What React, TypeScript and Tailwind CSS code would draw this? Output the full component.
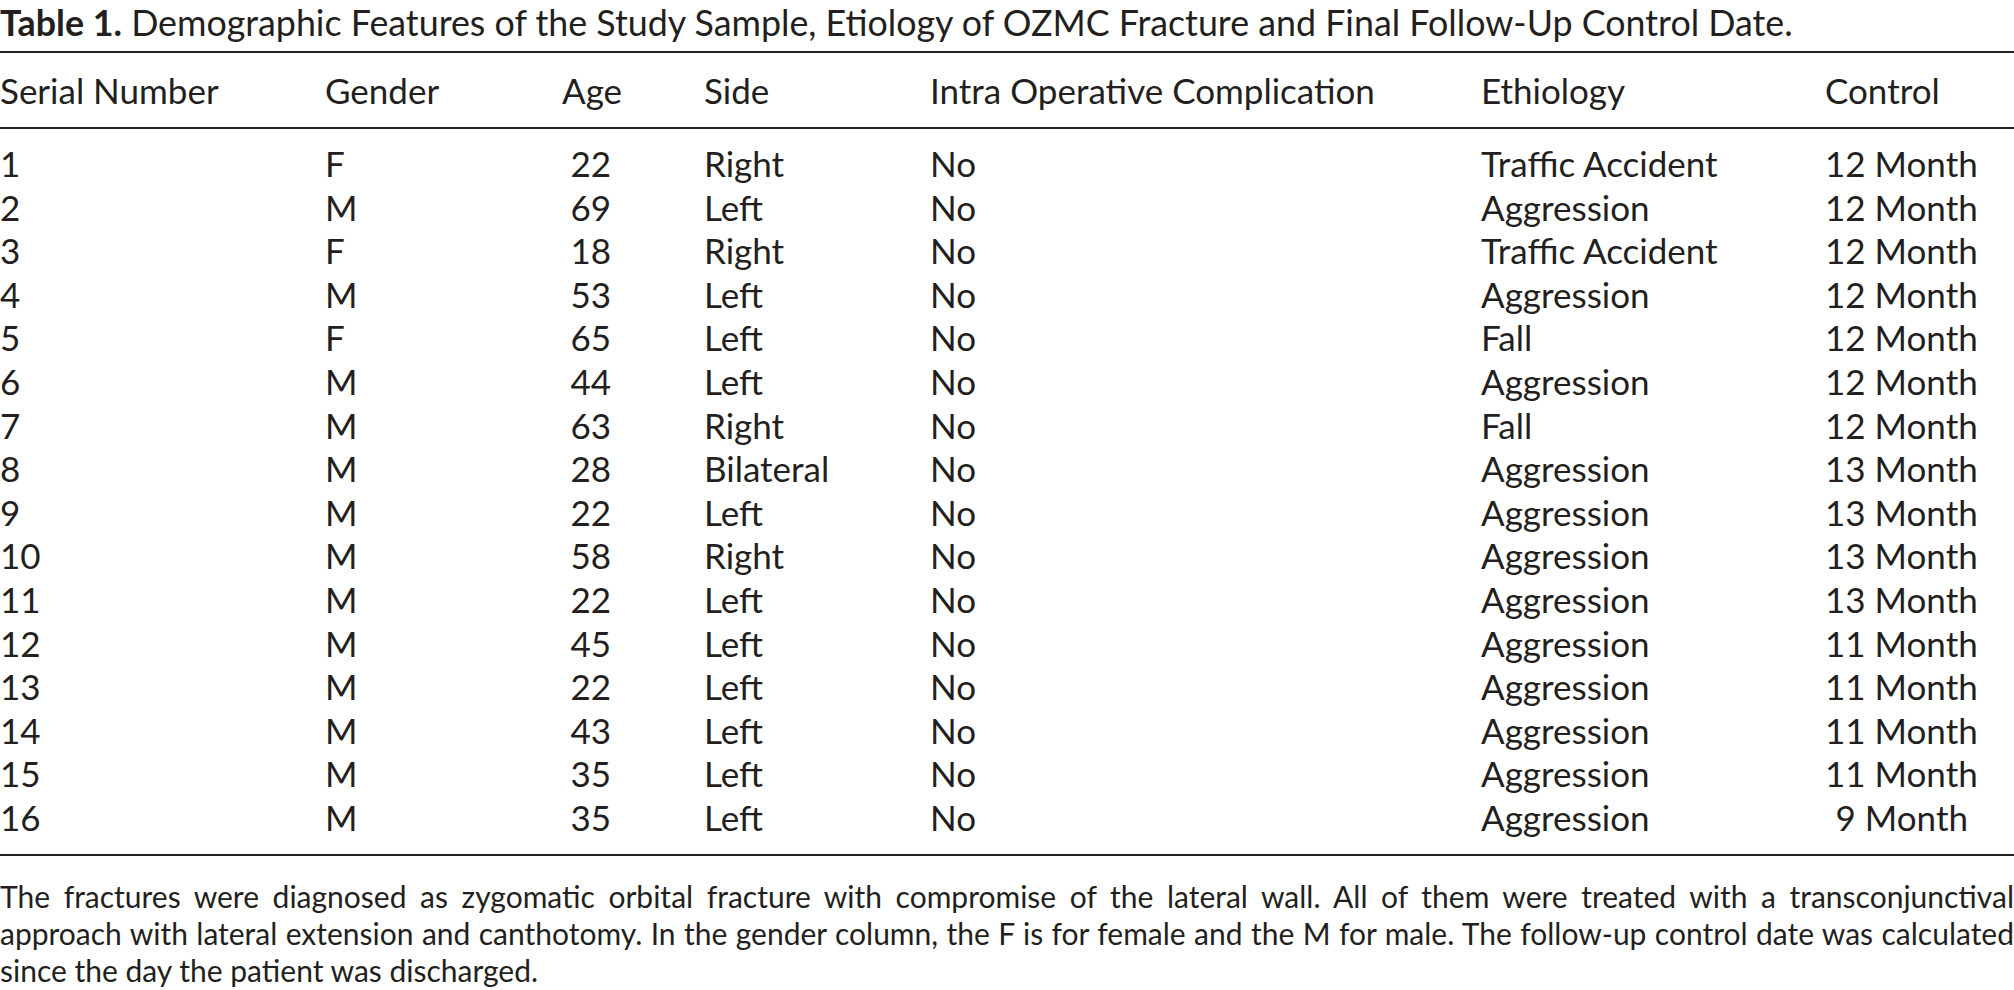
import React from "react";

type Row = {
  serial: string;
  gender: string;
  age: string;
  side: string;
  complication: string;
  etiology: string;
  control: string;
};

const rows: Row[] = [
  { serial: "1", gender: "F", age: "22", side: "Right", complication: "No", etiology: "Traffic Accident", control: "12 Month" },
  { serial: "2", gender: "M", age: "69", side: "Left", complication: "No", etiology: "Aggression", control: "12 Month" },
  { serial: "3", gender: "F", age: "18", side: "Right", complication: "No", etiology: "Traffic Accident", control: "12 Month" },
  { serial: "4", gender: "M", age: "53", side: "Left", complication: "No", etiology: "Aggression", control: "12 Month" },
  { serial: "5", gender: "F", age: "65", side: "Left", complication: "No", etiology: "Fall", control: "12 Month" },
  { serial: "6", gender: "M", age: "44", side: "Left", complication: "No", etiology: "Aggression", control: "12 Month" },
  { serial: "7", gender: "M", age: "63", side: "Right", complication: "No", etiology: "Fall", control: "12 Month" },
  { serial: "8", gender: "M", age: "28", side: "Bilateral", complication: "No", etiology: "Aggression", control: "13 Month" },
  { serial: "9", gender: "M", age: "22", side: "Left", complication: "No", etiology: "Aggression", control: "13 Month" },
  { serial: "10", gender: "M", age: "58", side: "Right", complication: "No", etiology: "Aggression", control: "13 Month" },
  { serial: "11", gender: "M", age: "22", side: "Left", complication: "No", etiology: "Aggression", control: "13 Month" },
  { serial: "12", gender: "M", age: "45", side: "Left", complication: "No", etiology: "Aggression", control: "11 Month" },
  { serial: "13", gender: "M", age: "22", side: "Left", complication: "No", etiology: "Aggression", control: "11 Month" },
  { serial: "14", gender: "M", age: "43", side: "Left", complication: "No", etiology: "Aggression", control: "11 Month" },
  { serial: "15", gender: "M", age: "35", side: "Left", complication: "No", etiology: "Aggression", control: "11 Month" },
  { serial: "16", gender: "M", age: "35", side: "Left", complication: "No", etiology: "Aggression", control: "9 Month" },
];

// column grid: 0 / 325 / 562 / 704 / 930 / 1481 / 1825 / end
const cols = "grid grid-cols-[325px_237px_142px_226px_551px_344px_1fr] whitespace-nowrap";

const App: React.FC = () => {
  return (
    <div className="w-[2014px] h-[990px] bg-white text-[#231f20] font-['Lato',_'Open_Sans',_sans-serif] overflow-hidden">
      <h1 className="text-[35.8px] leading-[46px] h-[51px] whitespace-nowrap">
        <span className="font-bold">Table 1.</span> Demographic Features of the Study Sample, Etiology of OZMC Fracture and Final Follow-Up Control Date.
      </h1>

      <div className="border-t-2 border-b-2 border-[#231f20] text-[35px]">
        <div className={`${cols} h-[76px] items-center border-b-2 border-[#231f20]`}>
          <div>Serial Number</div>
          <div>Gender</div>
          <div>Age</div>
          <div>Side</div>
          <div>Intra Operative Complication</div>
          <div>Ethiology</div>
          <div>Control</div>
        </div>

        <div className="pt-[8px] pb-[19px]">
          {rows.map((r) => (
            <div key={r.serial} className={`${cols} h-[43.6px] items-center`}>
              <div>{r.serial}</div>
              <div>{r.gender}</div>
              <div className="w-[49px] text-right">{r.age}</div>
              <div>{r.side}</div>
              <div>{r.complication}</div>
              <div>{r.etiology}</div>
              <div className="justify-self-end pr-[46px]">{r.control}</div>
            </div>
          ))}
        </div>
      </div>

      <div className="pt-[22px] text-[30px] leading-[37px]">
        <p className="text-justify [text-align-last:justify]">
          The fractures were diagnosed as zygomatic orbital fracture with compromise of the lateral wall. All of them were treated with a transconjunctival
        </p>
        <p className="text-justify [text-align-last:justify]">
          approach with lateral extension and canthotomy. In the gender column, the F is for female and the M for male. The follow-up control date was calculated
        </p>
        <p>since the day the patient was discharged.</p>
      </div>
    </div>
  );
};

export default App;
